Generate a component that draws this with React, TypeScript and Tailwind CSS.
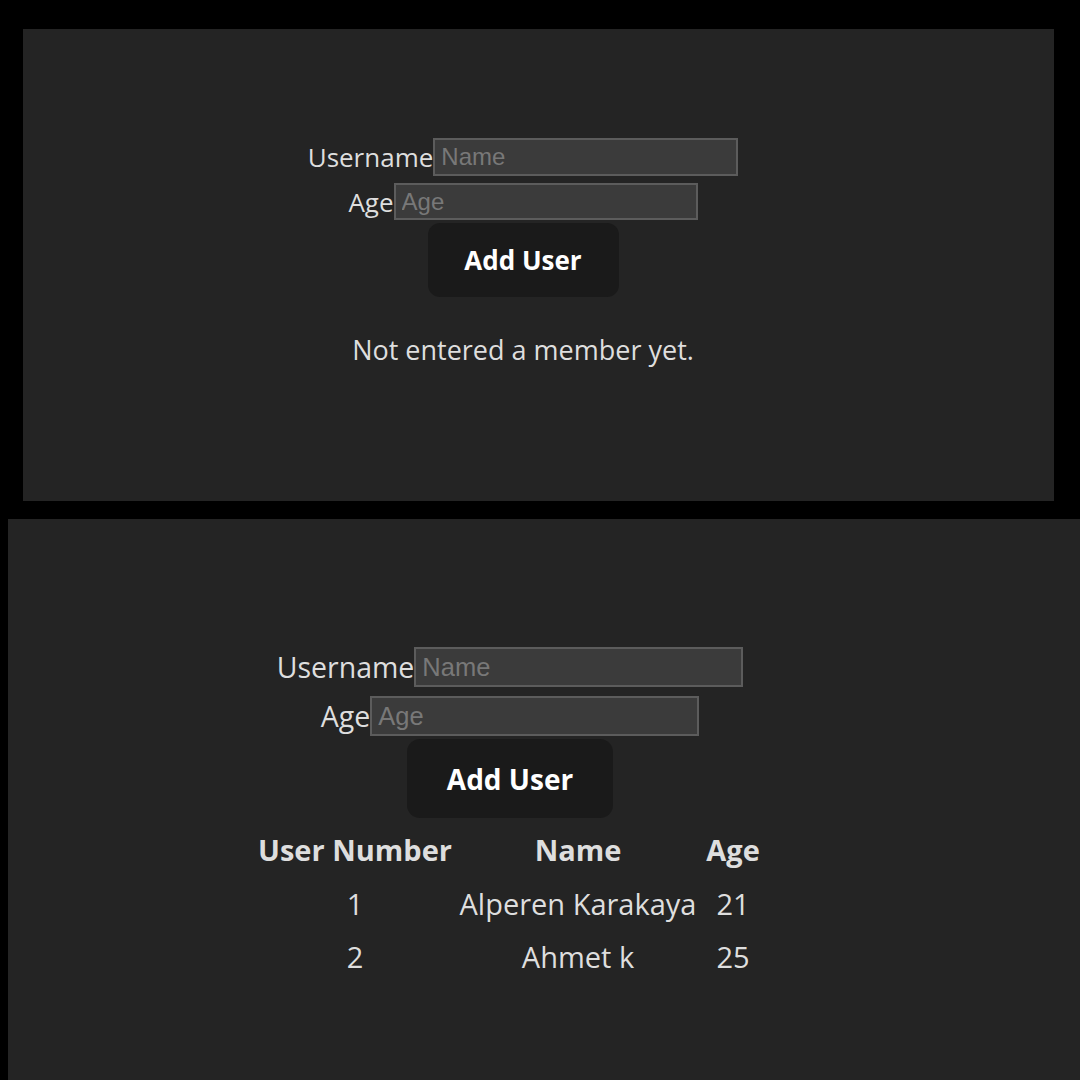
import React from 'react';

const font = { fontFamily: '"Open Sans", "Noto Sans", sans-serif' };

const users = [
  { id: 1, name: 'Alperen Karakaya', age: 21 },
  { id: 2, name: 'Ahmet k', age: 25 },
];

function Field({ label, placeholder, inputClass, labelClass }: { label: string; placeholder: string; inputClass: string; labelClass: string }) {
  return (
    <div className="flex items-center">
      <label className={labelClass}>{label}</label>
      <input
        placeholder={placeholder}
        className={`bg-[#3b3b3b] border-2 border-[#5c5c5c] px-[6px] text-[#e5e5e5] placeholder:text-[#787878] outline-none font-['Liberation_Sans',Arial,sans-serif] ${inputClass}`}
      />
    </div>
  );
}

export default function App() {
  return (
    <div className="min-h-screen w-[1080px] h-[1080px] overflow-hidden bg-black text-[#dedede]" style={font}>
      {/* empty state */}
      <div className="ml-[23px] mt-[29px] w-[1031px] h-[472px] bg-[#242424]">
        <div className="w-[1000px] pt-[109px] flex flex-col items-center">
          <Field label="Username" placeholder="Name" labelClass="text-[26px] leading-none" inputClass="w-[305px] h-[38px] text-[24px]" />
          <div className="mt-[7px]">
            <Field label="Age" placeholder="Age" labelClass="text-[26px] leading-none" inputClass="w-[304px] h-[37px] text-[24px]" />
          </div>
          <button className="mt-[3px] w-[191px] h-[74px] rounded-[12px] bg-[#1a1a1a] text-white font-bold text-[26px]">
            Add User
          </button>
          <p className="mt-[39px] text-[27px] leading-none">Not entered a member yet.</p>
        </div>
      </div>

      {/* with users */}
      <div className="ml-[8px] mt-[18px] w-[1072px] h-[561px] bg-[#242424]">
        <div className="w-[1004px] pt-[128px] flex flex-col items-center">
          <Field label="Username" placeholder="Name" labelClass="text-[28.5px] leading-none" inputClass="w-[329px] h-[40px] text-[25.5px]" />
          <div className="mt-[9px]">
            <Field label="Age" placeholder="Age" labelClass="text-[28.5px] leading-none" inputClass="w-[329px] h-[40px] text-[25.5px]" />
          </div>
          <button className="mt-[3px] w-[206px] h-[79px] rounded-[13px] bg-[#1a1a1a] text-white font-bold text-[28px]">
            Add User
          </button>
          <div className="mt-[10px] text-[29px]">
            <div className="grid grid-cols-[200px_246px_64px] h-[42px] items-center text-center font-bold">
              <div>User Number</div>
              <div>Name</div>
              <div>Age</div>
            </div>
            <div className="mt-[7px]">
              {users.map((u) => (
                <div key={u.id} className="grid grid-cols-[200px_246px_64px] h-[53px] items-center text-center">
                  <div>{u.id}</div>
                  <div>{u.name}</div>
                  <div>{u.age}</div>
                </div>
              ))}
            </div>
          </div>
        </div>
      </div>
    </div>
  );
}
